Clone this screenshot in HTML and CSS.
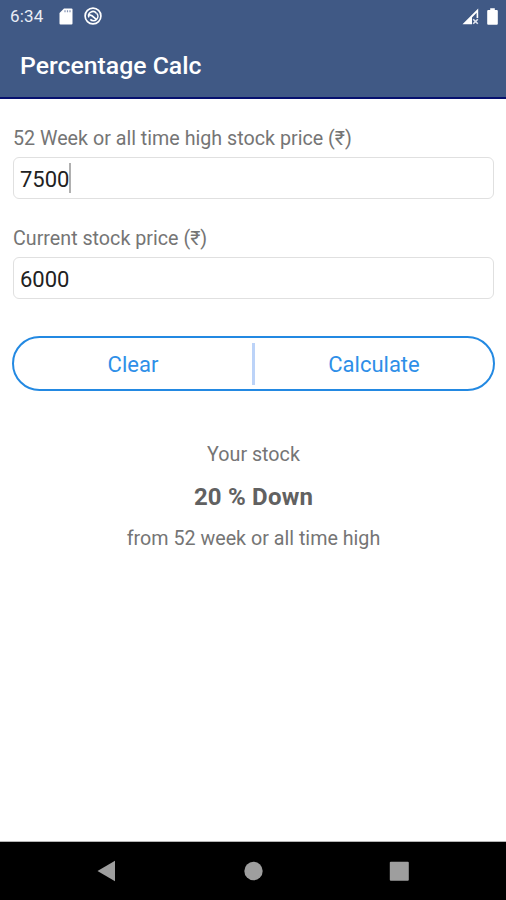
FILE: index.html
```html
<!DOCTYPE html>
<html lang="en">
<head>
    <meta charset="UTF-8">
    <meta name="viewport" content="width=device-width, initial-scale=1.0">
    <title>Percentage Calc</title>
    <link rel="stylesheet" href="styles.css">
</head>
<body>
    <div class="screen">
        <header class="app-header">
            <div class="status-bar">
                <span class="clock">6:34</span>
                <svg class="icon-sd" width="14" height="17" viewBox="0 0 14 17">
                    <path d="M5 0.5h7.5a1 1 0 0 1 1 1v14a1 1 0 0 1-1 1h-11a1 1 0 0 1-1-1V5z" fill="#fff"/>
                    <path d="M6 2.2v2M8.5 2.2v2M11 2.2v2" stroke="#8795b5" stroke-width="1.2"/>
                </svg>
                <svg class="icon-sync" width="18" height="18" viewBox="0 0 18 18" fill="none" stroke="#fff">
                    <circle cx="9" cy="9" r="7.9" stroke-width="1.7"/>
                    <path d="M4.9 10.4a4.3 4.3 0 0 1 7.4-4.2M12.6 6.2a4.3 4.3 0 0 1-6.3 6.2" stroke-width="1.6"/>
                    <path d="M4.8 7.6l3.2 1.2 4.6 3.8" stroke-width="1.7"/>
                </svg>
                <span class="spacer"></span>
                <svg class="icon-signal" width="17" height="17" viewBox="0 0 17 17">
                    <path d="M0.5 16.2L16.2 0.5V10h-1.6V4.8L10 9.6v6.6z" fill="#fff"/>
                    <path d="M11.2 11.2l4.6 4.6M15.8 11.2l-4.6 4.6" stroke="#dfe4ef" stroke-width="1.6"/>
                </svg>
                <svg class="icon-battery" width="11" height="17" viewBox="0 0 11 17">
                    <path d="M3.2 0.3h4.6v1.8h2a1 1 0 0 1 1 1v12.6a1 1 0 0 1-1 1H1.2a1 1 0 0 1-1-1V3.1a1 1 0 0 1 1-1h2z" fill="#fff"/>
                </svg>
            </div>
            <h1 class="app-title">Percentage Calc</h1>
        </header>

        <main class="content">
            <div class="form-group">
                <div class="label">52 Week or all time high stock price (₹)</div>
                <div class="input-field"><span>7500</span><span class="caret"></span></div>
            </div>
            <div class="form-group">
                <div class="label">Current stock price (₹)</div>
                <div class="input-field"><span>6000</span></div>
            </div>

            <div class="button-group">
                <button class="btn">Clear</button>
                <span class="divider"></span>
                <button class="btn">Calculate</button>
            </div>

            <div class="result">
                <p class="result-text">Your stock</p>
                <p class="result-value">20 % Down</p>
                <p class="result-text">from 52 week or all time high</p>
            </div>
        </main>

        <nav class="nav-bar">
            <svg width="20" height="22" viewBox="0 0 20 22"><path d="M0.5 11L18 0.8v20.4z" fill="#9e9e9e"/></svg>
            <svg width="20" height="22" viewBox="0 0 20 22"><circle cx="10.5" cy="11" r="9.2" fill="#9e9e9e"/></svg>
            <svg width="20" height="22" viewBox="0 0 20 22"><rect x="0.8" y="1.8" width="19" height="19" rx="1" fill="#9e9e9e"/></svg>
        </nav>
    </div>
</body>
</html>
```
FILE: styles.css
```css
* {
    box-sizing: border-box;
}
body {
    margin: 0;
    font-family: Roboto, 'Noto Sans', sans-serif;
    background: #ffffff;
    color: #757575;
}
.screen {
    display: flex;
    flex-direction: column;
    height: 900px;
    width: 100%;
}
.app-header {
    height: 99px;
    background: #405985;
    border-bottom: 2px solid #06106e;
    color: #ffffff;
}
.status-bar {
    display: flex;
    align-items: center;
    height: 32px;
    padding: 0 8px 0 10px;
}
.clock {
    width: 49px;
    font-size: 17px;
    letter-spacing: 0.2px;
    color: #e9edf5;
}
.icon-sync {
    margin-left: 11px;
}
.spacer {
    flex: 1;
}
.icon-battery {
    margin-left: 8px;
}
.app-title {
    margin: 0;
    padding-left: 20px;
    font-size: 24.8px;
    font-weight: 500;
    line-height: 68px;
    height: 65px;
}
.content {
    flex: 1;
    padding: 26px 12px 0 13px;
}
.form-group {
    margin-bottom: 26px;
}
.label {
    height: 32px;
    font-size: 19.7px;
    line-height: 28px;
}
.input-field {
    display: flex;
    align-items: center;
    height: 42px;
    padding: 2px 0 0 6px;
    border: 1.5px solid #e0e0e0;
    border-radius: 6px;
    font-size: 22px;
    color: #212121;
}
.caret {
    width: 2px;
    height: 30px;
    margin-top: -2px;
    background: #b0b0b0;
}
.button-group {
    display: flex;
    align-items: center;
    height: 55px;
    margin: 37px -1px 0 -1px;
    border: 2px solid #2389e2;
    border-radius: 28px;
}
.btn {
    flex: 1;
    padding: 1px 0 0;
    border: none;
    background: none;
    font-family: inherit;
    font-size: 22px;
    color: #2e8fe8;
    cursor: pointer;
}
.divider {
    width: 3px;
    height: 42px;
    background: #bcd3f8;
}
.result {
    margin-top: 50px;
    text-align: center;
}
.result-text {
    margin: 0;
    height: 26px;
    font-size: 19.7px;
    line-height: 28px;
}
.result-value {
    margin: 0;
    height: 58px;
    font-size: 24px;
    font-weight: 700;
    line-height: 60px;
    letter-spacing: 0.2px;
    color: #616161;
}
.nav-bar {
    display: flex;
    justify-content: center;
    align-items: center;
    gap: 126px;
    height: 59px;
    border-top: 1px solid #b5b5b5;
    background: #000000;
}
```
